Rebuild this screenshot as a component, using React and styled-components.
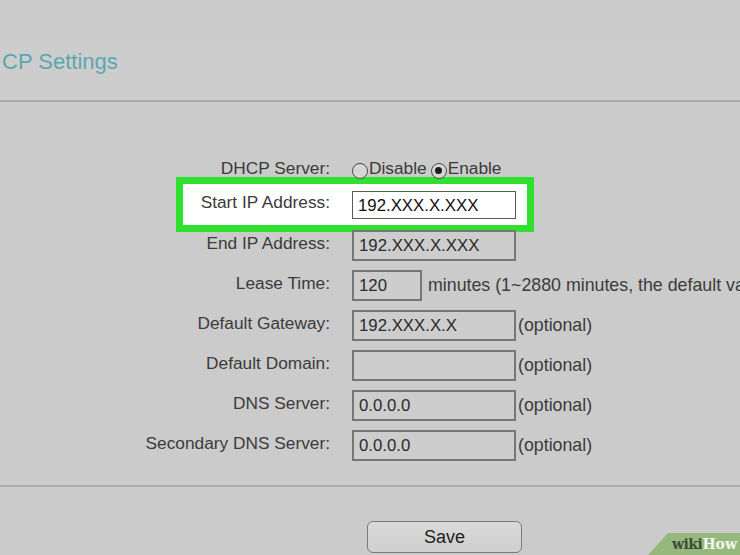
import React from "react";
import styled, { createGlobalStyle } from "styled-components";

const GlobalStyle = createGlobalStyle`
  html, body {
    margin: 0;
    padding: 0;
    background: #cbcbcb;
    overflow: hidden;
  }
`;

function Radio({ checked, label }) {
  return (
    <RadioItem>
      <RadioDot $checked={checked} />
      {label}
    </RadioItem>
  );
}

function Field({ label, value, width, highlight, suffix }) {
  return (
    <Row $highlight={highlight}>
      <Label>{label}</Label>
      <FieldCell>
        <Input $width={width} $highlight={highlight}>
          {value}
        </Input>
        {suffix && <Suffix $gap={width ? 6 : 2}>{suffix}</Suffix>}
      </FieldCell>
    </Row>
  );
}

function App() {
  return (
    <Page>
      <GlobalStyle />
      <TopStrip />
      <TitleBand>
        <Title>CP Settings</Title>
      </TitleBand>

      <Form>
        <Row>
          <Label $shift={4}>DHCP Server:</Label>
          <RadioGroup>
            <Radio label="Disable" />
            <Radio label="Enable" checked />
          </RadioGroup>
        </Row>
        <Field label="Start IP Address:" value="192.XXX.X.XXX" highlight />
        <Field label="End IP Address:" value="192.XXX.X.XXX" />
        <Field
          label="Lease Time:"
          value="120"
          width={70}
          suffix="minutes (1~2880 minutes, the default value is 120)"
        />
        <Field label="Default Gateway:" value="192.XXX.X.X" suffix="(optional)" />
        <Field label="Default Domain:" value="" suffix="(optional)" />
        <Field label="DNS Server:" value="0.0.0.0" suffix="(optional)" />
        <Field label="Secondary DNS Server:" value="0.0.0.0" suffix="(optional)" />
      </Form>

      <Footer>
        <SaveButton>Save</SaveButton>
      </Footer>

      <Badge>
        <Wiki>wiki</Wiki>
        <How>How</How>
      </Badge>
    </Page>
  );
}

const Page = styled.div`
  position: relative;
  width: 740px;
  height: 555px;
  overflow: hidden;
  background: #cbcbcb;
  font-family: "Liberation Sans", Arial, sans-serif;
`;

const TopStrip = styled.div`
  height: 42px;
  background: #cbcbcb;
`;

const TitleBand = styled.div`
  height: 58px;
  background: #cdcdcd;
  border-bottom: 2px solid #a8a8a8;
  display: flex;
  align-items: center;
`;

const Title = styled.h1`
  margin: 0 0 0 2px;
  padding-bottom: 18px;
  font-size: 22px;
  font-weight: normal;
  color: #5aa7b0;
  white-space: nowrap;
`;

const Form = styled.div`
  padding-top: 45px;
  display: flex;
  flex-direction: column;
`;

const Row = styled.div`
  display: grid;
  grid-template-columns: ${(p) => (p.$highlight ? "147px" : "330px")} auto;
  column-gap: 22px;
  align-items: center;
  height: 40px;
  &:first-child {
    height: 38px;
  }
  ${(p) =>
    p.$highlight &&
    `
    margin: -8px 0 -7px 176px;
    width: 358px;
    box-sizing: border-box;
    height: 55px;
    border: 7px solid #2fe02f;
    background: #ffffff;
  `}
`;

const Label = styled.div`
  text-align: right;
  font-size: 17.3px;
  color: #3b3b3b;
  white-space: nowrap;
  padding-bottom: 4px;
  margin-top: ${(p) => (p.$shift ? `${p.$shift * 2}px` : "0")};
`;

const FieldCell = styled.div`
  display: flex;
  align-items: center;
  white-space: nowrap;
`;

const Input = styled.div`
  box-sizing: border-box;
  width: ${(p) => (p.$width ? `${p.$width}px` : "164px")};
  height: ${(p) => (p.$highlight ? "28px" : "31px")};
  padding: 2px 0 0 5px;
  display: flex;
  align-items: center;
  font-size: 16.8px;
  color: ${(p) => (p.$highlight ? "#111" : "#2a2a2a")};
  background: ${(p) => (p.$highlight ? "#ffffff" : "#cdcdcd")};
  border: ${(p) => (p.$highlight ? "1.5px solid #5a5a5a" : "2px solid #767676")};
`;

const Suffix = styled.span`
  margin-left: ${(p) => p.$gap}px;
  font-size: 17.8px;
  color: #3b3b3b;
`;

const RadioGroup = styled.div`
  display: flex;
  align-items: center;
  gap: 4px;
  font-size: 17.3px;
  color: #3b3b3b;
  margin-top: 4px;
`;

const RadioItem = styled.span`
  display: inline-flex;
  align-items: center;
`;

const RadioDot = styled.span`
  position: relative;
  box-sizing: border-box;
  width: 16px;
  height: 16px;
  margin-top: 5px;
  margin-right: 1px;
  border-radius: 50%;
  border: 1.5px solid #4a4a4a;
  background: #d6d6d6;
  &::after {
    content: "";
    display: ${(p) => (p.$checked ? "block" : "none")};
    position: absolute;
    left: 3px;
    top: 3px;
    width: 7px;
    height: 7px;
    border-radius: 50%;
    background: #1e1e1e;
  }
`;

const Footer = styled.div`
  margin-top: 20px;
  border-top: 2px solid #acacac;
  padding: 34px 0 0 367px;
`;

const SaveButton = styled.button`
  box-sizing: border-box;
  width: 155px;
  height: 32px;
  border: 1.5px solid #7a7a7a;
  border-radius: 6px;
  background: linear-gradient(#dadada, #cfcfcf);
  font-family: "Liberation Sans", Arial, sans-serif;
  font-size: 18px;
  color: #222;
  padding: 0;
`;

const Badge = styled.div`
  position: absolute;
  left: 648px;
  top: 533px;
  width: 92px;
  height: 22px;
  background: #95b87c;
  clip-path: polygon(20px 0, 100% 0, 100% 100%, 0 100%);
  display: flex;
  align-items: center;
  justify-content: flex-end;
  padding-right: 3px;
  box-sizing: border-box;
  font-family: "DejaVu Serif", "Liberation Serif", serif;
  font-weight: bold;
  font-size: 14px;
`;

const Wiki = styled.span`
  color: #3f4d36;
  letter-spacing: -0.5px;
`;

const How = styled.span`
  color: #f4f8f0;
`;

export default App;
